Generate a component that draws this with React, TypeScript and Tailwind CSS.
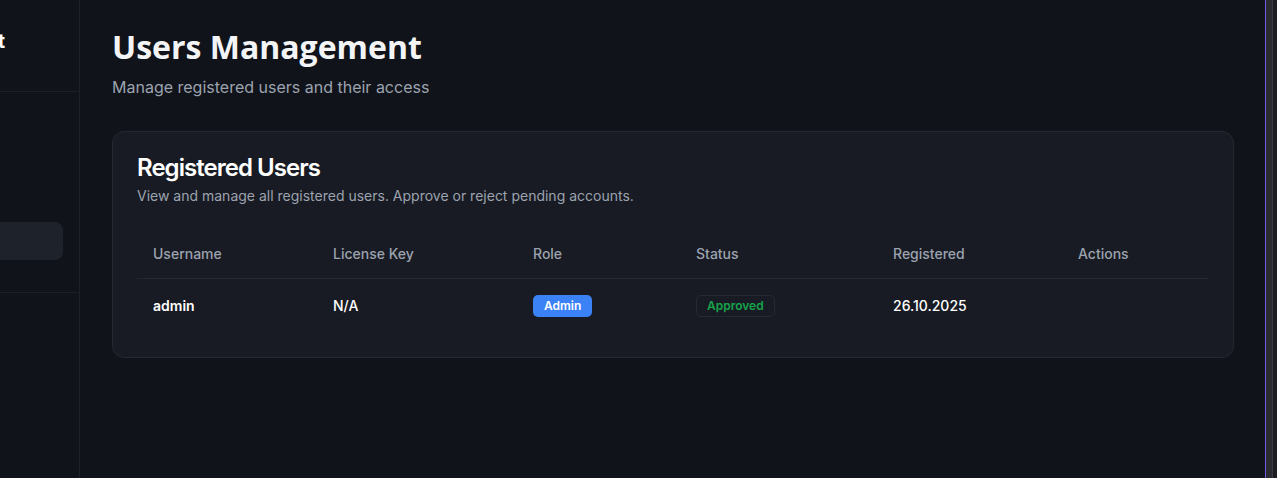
import { Fragment } from 'react';

type User = {
  username: string;
  licenseKey: string | null;
  role: 'admin' | 'user';
  status: 'approved' | 'pending' | 'rejected';
  registered: string;
};

const users: User[] = [
  { username: 'admin', licenseKey: null, role: 'admin', status: 'approved', registered: '26.10.2025' },
];

const columns = [
  { label: 'Username', width: 'w-[180px]' },
  { label: 'License Key', width: 'w-[200px]' },
  { label: 'Role', width: 'w-[163px]' },
  { label: 'Status', width: 'w-[197px]' },
  { label: 'Registered', width: 'w-[185px]' },
  { label: 'Actions', width: '' },
];

const Sidebar = () => (
  <aside className="w-[80px] shrink-0 border-r border-[#1d2028] flex flex-col overflow-hidden">
    <div className="h-[92px] border-b border-[#1d2028] flex justify-end items-start pt-[26px] pr-[74px] whitespace-nowrap">
      <span className="text-[20px] font-bold text-white">Admin Management</span>
    </div>
    <nav className="h-[201px] border-b border-[#1d2028] pt-[130px] pr-4">
      <div className="-ml-8 h-[38px] rounded-lg bg-[#1e222a]" />
    </nav>
  </aside>
);

const RoleBadge = ({ role }: { role: User['role'] }) =>
  role === 'admin' ? (
    <span className="inline-flex items-center h-[22px] px-[11px] rounded-[5px] bg-[#3b82f6] text-white text-xs font-semibold">
      Admin
    </span>
  ) : (
    <span className="inline-flex items-center h-[22px] px-[11px] rounded-[5px] border border-[#262a33] text-gray-300 text-xs font-semibold">
      User
    </span>
  );

const StatusBadge = ({ status }: { status: User['status'] }) => (
  <span className="inline-flex items-center h-[22px] px-[10px] rounded-[5px] border border-[#252932] text-[#16a34a] text-xs font-semibold">
    {status === 'approved' ? 'Approved' : status === 'pending' ? 'Pending' : 'Rejected'}
  </span>
);

export default function App() {
  return (
    <div
      className="h-[478px] w-[1277px] flex bg-[#10131a] overflow-hidden"
      style={{ fontFamily: 'Inter, "Liberation Sans", sans-serif' }}
    >
      <div className="w-[1265px] flex">
        <Sidebar />
        <main className="flex-1 pl-8 pr-[31px] pt-[29px]">
          <h1
            className="text-[32px] leading-9 font-bold text-[#f3f4f6]"
            style={{ fontFamily: '"Open Sans", "Liberation Sans", sans-serif' }}
          >
            Users Management
          </h1>
          <p className="mt-[10px] text-base text-[#9ca3af]">Manage registered users and their access</p>

          <div className="mt-[32px] rounded-xl border border-[#242831] bg-[#181b23] px-6 pt-[20px] pb-[23px]">
            <h2 className="text-2xl font-semibold tracking-[-0.04em] text-white leading-8">Registered Users</h2>
            <p className="text-sm text-[#9ca3af] mt-[2px]">
              View and manage all registered users. Approve or reject pending accounts.
            </p>

            <table className="mt-[24px] w-full text-sm">
              <thead>
                <tr className="border-b border-[#242831] h-[48px]">
                  {columns.map((c) => (
                    <th key={c.label} className={`${c.width} px-4 text-left font-medium text-[#9ca3af]`}>
                      {c.label}
                    </th>
                  ))}
                </tr>
              </thead>
              <tbody>
                {users.map((u) => (
                  <Fragment key={u.username}>
                    <tr className="h-[56px]">
                      <td className="px-4 font-semibold text-white">{u.username}</td>
                      <td className="px-4 font-medium text-white">{u.licenseKey ?? 'N/A'}</td>
                      <td className="px-4">
                        <RoleBadge role={u.role} />
                      </td>
                      <td className="px-4">
                        <StatusBadge status={u.status} />
                      </td>
                      <td className="px-4 font-medium text-white">{u.registered}</td>
                      <td className="px-4" />
                    </tr>
                  </Fragment>
                ))}
              </tbody>
            </table>
          </div>
        </main>
      </div>
      <div className="w-px bg-[#6d5ae6]" />
      <div className="w-[6px] bg-[#2a2b31]" />
      <div className="w-px bg-[#3b3c42]" />
      <div className="flex-1 bg-[#1c1d21]" />
    </div>
  );
}
